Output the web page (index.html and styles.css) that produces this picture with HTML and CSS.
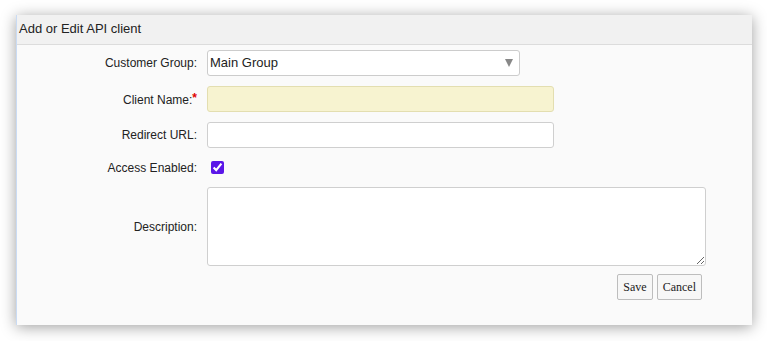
FILE: index.html
```html
<!DOCTYPE html>
<html>
<head>
<meta charset="utf-8">
<link rel="stylesheet" href="styles.css">
</head>
<body>
<div class="page">
  <div class="panel">
    <div class="panel-head">Add or Edit API client</div>
    <form class="panel-body">
      <label class="lbl">Customer Group:</label>
      <div class="field">
        <div class="select-wrap">
          <select class="select"><option>Main Group</option></select>
          <span class="arrow"></span>
        </div>
      </div>

      <label class="lbl">Client Name:<span class="req">*</span></label>
      <div class="field"><input class="input required" type="text"></div>

      <label class="lbl">Redirect URL:</label>
      <div class="field"><input class="input" type="text"></div>

      <label class="lbl">Access Enabled:</label>
      <div class="field"><input class="check" type="checkbox" checked></div>

      <label class="lbl">Description:</label>
      <div class="field"><textarea class="textarea"></textarea></div>

      <div></div>
      <div class="actions">
        <button type="button" class="btn">Save</button>
        <button type="button" class="btn">Cancel</button>
      </div>
    </form>
  </div>
</div>
</body>
</html>
```

FILE: styles.css
```css
html, body {
  margin: 0;
  padding: 0;
  background: #ffffff;
}
.page {
  padding: 15px 15px 16px 16px;
  font-family: "Liberation Sans", Arial, sans-serif;
  color: #222;
}
.panel {
  width: 735px;
  height: 310px;
  background: #fafafa;
  border-left: 1px solid #c9dbf4;
  box-shadow: 0 2px 14px rgba(0, 0, 0, 0.38);
}
.panel-head {
  height: 29px;
  line-height: 27px;
  padding-left: 2px;
  font-size: 13px;
  background: #f1f1f1;
  border-bottom: 1px solid #dcdcdc;
}
.panel-body {
  display: grid;
  grid-template-columns: 180px 499px;
  column-gap: 10px;
  row-gap: 10px;
  align-items: center;
  padding-top: 5px;
  margin: 0;
}
.lbl {
  text-align: right;
  font-size: 12px;
  color: #222;
}
.req {
  color: #e00000;
  font-size: 12px;
  font-weight: bold;
  vertical-align: 2px;
}
.field {
  display: flex;
  align-items: center;
}
.select-wrap {
  position: relative;
  width: 313px;
  height: 26px;
}
.select {
  appearance: none;
  -webkit-appearance: none;
  box-sizing: border-box;
  width: 313px;
  height: 26px;
  margin: 0;
  padding: 0 0 2px 2px;
  font-family: "Liberation Sans", Arial, sans-serif;
  font-size: 13px;
  color: #222;
  background: #ffffff;
  border: 1px solid #cccccc;
  border-radius: 3px;
  outline: none;
}
.arrow {
  position: absolute;
  right: 7px;
  top: 9px;
  width: 0;
  height: 0;
  border-left: 4.5px solid transparent;
  border-right: 4.5px solid transparent;
  border-top: 8px solid #888888;
}
.input {
  box-sizing: border-box;
  width: 347px;
  height: 26px;
  margin: 0;
  padding: 0 3px;
  font-size: 13px;
  background: #ffffff;
  border: 1px solid #cfcfcf;
  border-radius: 3px;
  outline: none;
}
.input.required {
  background: #f7f3d0;
  border-color: #e3deb0;
}
.check {
  width: 13px;
  height: 13px;
  margin: 3px 4px;
  accent-color: #5a16e8;
}
.textarea {
  box-sizing: border-box;
  width: 499px;
  height: 79px;
  margin: 0;
  background: #ffffff;
  border: 1px solid #cfcfcf;
  border-radius: 3px;
  outline: none;
  display: block;
}
.actions {
  display: flex;
  justify-content: flex-end;
  gap: 4px;
  padding-right: 4px;
  margin-top: -2px;
}
.btn {
  box-sizing: border-box;
  height: 26px;
  margin: 0;
  padding: 0 5px;
  font-family: "Liberation Serif", "Times New Roman", serif;
  font-size: 12px;
  color: #222;
  background: #f7f7f7;
  border: 1px solid #bdbdbd;
  border-radius: 2px;
}
```
